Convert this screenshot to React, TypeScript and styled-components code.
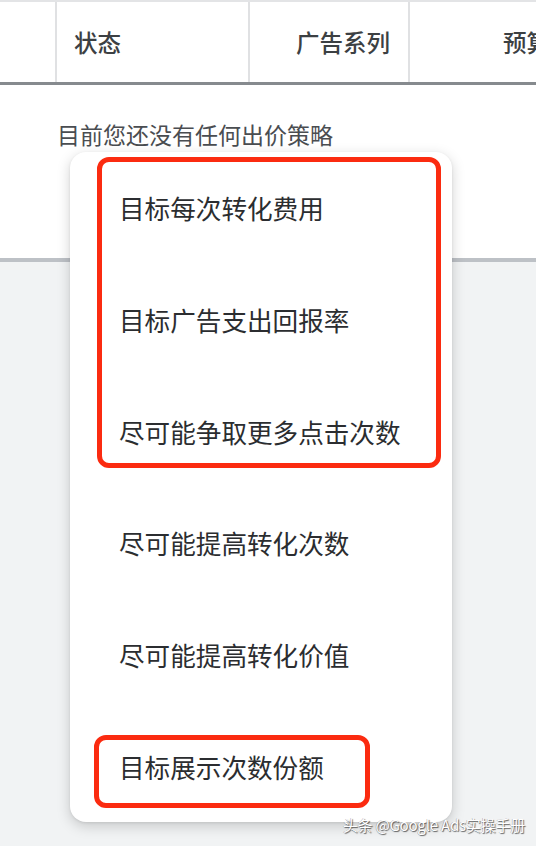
import React from 'react';
import styled, { createGlobalStyle } from 'styled-components';

const GlobalStyle = createGlobalStyle`
  html, body {
    margin: 0;
    padding: 0;
    background: #f1f3f4;
  }
  * {
    box-sizing: border-box;
  }
`;

const Page = styled.div`
  position: relative;
  width: 536px;
  height: 846px;
  overflow: hidden;
  background: #f1f3f4;
  font-family: 'Noto Sans CJK SC', 'Noto Sans', sans-serif;
  color: #3c4043;
`;

const TableHeader = styled.div`
  display: grid;
  grid-template-columns: 55px 193px 160px 160px;
  height: 85px;
  background: #fff;
  border-top: 2px solid #e3e4e6;
  border-bottom: 3px solid #868a8e;
  width: 568px;
`;

const HeaderCell = styled.div<{ $align?: 'left' | 'right' }>`
  display: flex;
  align-items: center;
  justify-content: ${(p) => (p.$align === 'right' ? 'flex-end' : 'flex-start')};
  padding: 0 18px 0 17px;
  font-size: 23.5px;
  font-weight: 500;
  color: #3c4043;
  border-left: 2px solid #e0e1e3;
  white-space: nowrap;

  &:first-child {
    border-left: none;
  }
`;

const EmptySection = styled.div`
  background: #fff;
  height: 177px;
  padding: 32px 0 0 57px;
  font-size: 23px;
  color: #4a4d51;
  border-bottom: 4px solid #bdc1c6;
`;

const Menu = styled.div`
  position: absolute;
  left: 70px;
  top: 152px;
  width: 382px;
  background: #fff;
  border-radius: 16px;
  box-shadow: 0 4px 14px rgba(0, 0, 0, 0.18), 0 1px 3px rgba(0, 0, 0, 0.08);
`;

const MenuItem = styled.div`
  display: flex;
  align-items: center;
  height: 111.7px;
  padding-left: 49px;
  font-size: 25.6px;
  color: #2b2d30;
  white-space: nowrap;
`;

const Highlight = styled.div<{ $top: number; $left: number; $width: number; $height: number }>`
  position: absolute;
  top: ${(p) => p.$top}px;
  left: ${(p) => p.$left}px;
  width: ${(p) => p.$width}px;
  height: ${(p) => p.$height}px;
  border: 5px solid #fb2b10;
  border-radius: 12px;
  pointer-events: none;
`;

const Watermark = styled.div`
  position: absolute;
  right: 11px;
  bottom: 11px;
  font-size: 15px;
  color: #fff;
  letter-spacing: -0.2px;
  text-shadow: 1px 1px 1px rgba(0, 0, 0, 0.6), -0.5px -0.5px 0.5px rgba(0, 0, 0, 0.35);
  white-space: nowrap;
`;

const options = [
  '目标每次转化费用',
  '目标广告支出回报率',
  '尽可能争取更多点击次数',
  '尽可能提高转化次数',
  '尽可能提高转化价值',
  '目标展示次数份额',
];

export default function App() {
  return (
    <Page>
      <GlobalStyle />
      <TableHeader>
        <HeaderCell />
        <HeaderCell>状态</HeaderCell>
        <HeaderCell $align="right">广告系列</HeaderCell>
        <HeaderCell $align="right">预算</HeaderCell>
      </TableHeader>
      <EmptySection>目前您还没有任何出价策略</EmptySection>
      <Menu>
        {options.map((label) => (
          <MenuItem key={label}>{label}</MenuItem>
        ))}
        <Highlight $top={5} $left={27} $width={344} $height={311} />
        <Highlight $top={583} $left={24} $width={276} $height={73} />
      </Menu>
      <Watermark>头条 @Google Ads实操手册</Watermark>
    </Page>
  );
}
